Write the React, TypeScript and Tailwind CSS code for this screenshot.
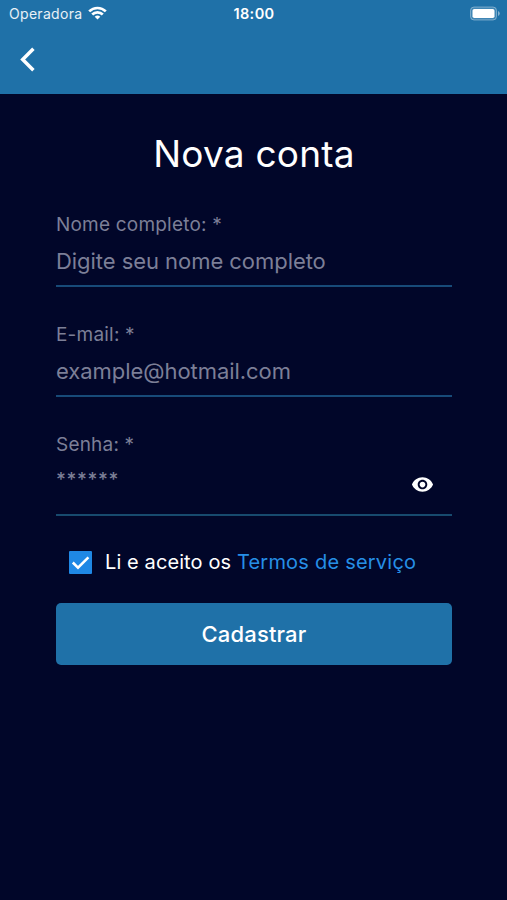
import { useState } from "react";
import { MdVisibility } from "react-icons/md";

function StatusBar() {
  return (
    <div className="grid h-7 grid-cols-3 items-center pl-[9px] pr-[6px] text-white">
      <div className="flex items-center gap-[6px]">
        <span className="text-[14px] leading-7 tracking-[0.3px] text-white/90">Operadora</span>
        <svg className="-mt-[2px]" width="19" height="14" viewBox="0 0 19 14" fill="none" stroke="currentColor" strokeWidth="2.7">
          <path d="M1.2 5.4a11.8 11.8 0 0 1 16.6 0" />
          <path d="M4.2 8.5a7.5 7.5 0 0 1 10.6 0" />
          <path d="M9.5 13.6 6.7 10.8a4 4 0 0 1 5.6 0Z" fill="currentColor" stroke="none" />
        </svg>
      </div>
      <span className="-ml-[2px] text-center text-[14.5px] font-semibold leading-7 tracking-[0.4px]">18:00</span>
      <svg className="-mt-[2px] justify-self-end" width="32" height="15" viewBox="0 0 32 15">
        <rect x="1.5" y="1" width="26" height="13" rx="3.5" fill="#fff" fillOpacity="0.15" stroke="#fff" strokeOpacity="0.35" />
        <rect x="3.5" y="3" width="22" height="9" rx="1.8" fill="#fff" />
        <path d="M29 5v5q1.8-.8 1.8-2.5T29 5Z" fill="#fff" fillOpacity="0.45" />
      </svg>
    </div>
  );
}

function Header() {
  return (
    <header className="h-[94px] bg-[#1f71a8]">
      <StatusBar />
      <button type="button" aria-label="Voltar" className="ml-[18px] mt-[18px] block text-white">
        <svg width="18" height="27" viewBox="0 0 18 27" fill="none" stroke="currentColor" strokeWidth="3.5">
          <path d="M15.4 2.8 4.7 13.5l10.7 10.7" />
        </svg>
      </button>
    </header>
  );
}

type FieldProps = {
  id: string;
  label: string;
  placeholder: string;
  type?: string;
};

function Field({ id, label, placeholder, type = "text" }: FieldProps) {
  return (
    <div className="h-[110px]">
      <label htmlFor={id} className="block text-[19px] leading-6 tracking-[0.2px] text-[#7c7f97]">
        {label}
      </label>
      <div className="mt-[5px] h-[45px] border-b-2 border-[#174a78]">
        <input
          id={id}
          type={type}
          placeholder={placeholder}
          className="block h-[38px] w-full bg-transparent text-[22px] tracking-[-0.05px] text-white outline-none placeholder:text-[#7c7f97]"
        />
      </div>
    </div>
  );
}

function PasswordField() {
  const [visible, setVisible] = useState(false);

  return (
    <div className="h-[117px]">
      <label htmlFor="senha" className="block text-[19px] leading-6 tracking-[0.2px] text-[#7c7f97]">
        Senha: *
      </label>
      <div className="mt-[5px] flex h-[54px] border-b-2 border-[#174a6e] pr-[18px]">
        <input
          id="senha"
          type={visible ? "text" : "password"}
          placeholder="******"
          className="block h-[34px] min-w-0 flex-1 bg-transparent text-[19px] tracking-[0.6px] text-white outline-none placeholder:font-medium placeholder:text-[#7c7f97]"
        />
        <button
          type="button"
          aria-label="Mostrar senha"
          className="mt-[11px] h-[23px] text-white"
          onClick={() => setVisible(!visible)}
        >
          <MdVisibility size={23} />
        </button>
      </div>
    </div>
  );
}

function Terms() {
  const [accepted, setAccepted] = useState(true);

  return (
    <div className="ml-[13px] flex h-6 items-center">
      <button
        type="button"
        role="checkbox"
        aria-checked={accepted}
        aria-label="Aceito os termos"
        className="size-[23px] shrink-0 rounded-[1px] bg-[#1f88e5]"
        onClick={() => setAccepted(!accepted)}
      >
        {accepted && (
          <svg width="23" height="23" viewBox="0 0 23 23" fill="none" stroke="#fff" strokeWidth="2.5">
            <path d="m3.8 11.5 5.2 5.2L19.4 6.3" />
          </svg>
        )}
      </button>
      <p className="ml-[13px] whitespace-nowrap text-[20px] leading-6 tracking-[0.1px] text-white">
        Li e aceito os{" "}
        <a href="#termos" className="tracking-[0.22px] text-[#268fe6]">
          Termos de serviço
        </a>
      </p>
    </div>
  );
}

export default function App() {
  return (
    <div className="h-[900px] w-full overflow-hidden bg-[#010629] font-['Inter','Liberation_Sans',sans-serif]">
      <Header />
      <main className="pl-[56px] pr-[55px] pt-[36px]">
        <h1 className="text-center text-[37px] leading-[48px] tracking-[0.2px] text-white">Nova conta</h1>
        <form className="mt-[35px]" onSubmit={(e) => e.preventDefault()}>
          <Field id="nome" label="Nome completo: *" placeholder="Digite seu nome completo" />
          <Field id="email" label="E-mail: *" placeholder="example@hotmail.com" type="email" />
          <PasswordField />
          <Terms />
          <button
            type="submit"
            className="mt-[29px] block h-[62px] w-full rounded-[5px] bg-[#1f71a8] text-[22px] font-medium tracking-[0.15px] text-white"
          >
            Cadastrar
          </button>
        </form>
      </main>
    </div>
  );
}
